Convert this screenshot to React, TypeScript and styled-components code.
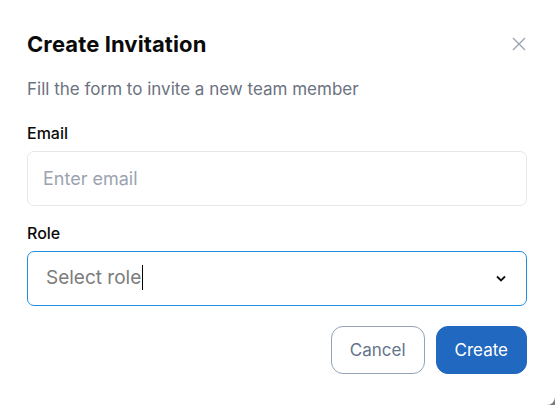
import React from 'react';
import styled, { createGlobalStyle } from 'styled-components';

const GlobalStyle = createGlobalStyle`
  html, body {
    margin: 0;
    padding: 0;
    background: #7a7a7a;
  }
  * {
    box-sizing: border-box;
  }
`;

const Dialog = styled.div`
  width: 555px;
  height: 405px;
  background: #ffffff;
  border-bottom-right-radius: 8px;
  padding: 28px 28px 0 27px;
  font-family: Inter, 'Noto Sans', sans-serif;
  display: flex;
  flex-direction: column;
`;

const Header = styled.div`
  display: flex;
  align-items: center;
  justify-content: space-between;
  height: 32px;
`;

const Title = styled.h2`
  margin: 0;
  font-size: 22px;
  font-weight: 700;
  color: #0a0a0a;
  letter-spacing: 0.1px;
`;

const CloseButton = styled.button`
  border: none;
  background: none;
  padding: 0;
  margin-right: -1px;
  width: 18px;
  height: 18px;
  display: flex;
  align-items: center;
  justify-content: center;
  color: #9ca3af;
  cursor: pointer;
`;

const Description = styled.p`
  margin: 17px 0 0;
  font-size: 17px;
  line-height: 24px;
  color: #6b7280;
`;

const Field = styled.div<{ $top: number }>`
  display: flex;
  flex-direction: column;
  gap: 8px;
  margin-top: ${(p) => p.$top}px;
`;

const Label = styled.label`
  font-size: 16px;
  font-weight: 500;
  line-height: 20px;
  color: #0a0a0a;
`;

const Box = styled.div<{ $focused?: boolean }>`
  height: 55px;
  border: 1px solid ${(p) => (p.$focused ? '#1d8fde' : '#e5e7eb')};
  border-radius: 7px;
  display: flex;
  align-items: center;
  padding: 0 20px 0 ${(p) => (p.$focused ? 18 : 15)}px;
  font-size: ${(p) => (p.$focused ? 19 : 18)}px;
`;

const Placeholder = styled.span<{ $tone: string }>`
  flex: 1;
  color: ${(p) => p.$tone};
`;

const Caret = styled.span`
  display: inline-block;
  width: 1px;
  height: 25px;
  background: #000;
  vertical-align: middle;
  margin-left: 1px;
  transform: translateY(-1px);
`;

const Footer = styled.div`
  display: flex;
  justify-content: flex-end;
  gap: 11px;
  margin-top: 20px;
`;

const Button = styled.button<{ $primary?: boolean }>`
  height: 48px;
  padding: 0 18px;
  border-radius: 12px;
  font-family: inherit;
  font-size: 17px;
  cursor: pointer;
  border: 1px solid ${(p) => (p.$primary ? '#2168c0' : '#94a3b8')};
  background: ${(p) => (p.$primary ? '#2168c0' : '#ffffff')};
  color: ${(p) => (p.$primary ? '#ffffff' : '#64748b')};
`;

const App: React.FC = () => (
  <>
    <GlobalStyle />
    <Dialog>
      <Header>
        <Title>Create Invitation</Title>
        <CloseButton aria-label="Close">
          <svg width="16" height="16" viewBox="0 0 16 16" fill="none">
            <path d="M2 2L14 14M14 2L2 14" stroke="currentColor" strokeWidth="1.4" />
          </svg>
        </CloseButton>
      </Header>
      <Description>Fill the form to invite a new team member</Description>
      <Field $top={22}>
        <Label>Email</Label>
        <Box>
          <Placeholder $tone="#9ca3af">Enter email</Placeholder>
        </Box>
      </Field>
      <Field $top={17}>
        <Label>Role</Label>
        <Box $focused>
          <Placeholder $tone="#7c7c7c">
            Select role
            <Caret />
          </Placeholder>
          <svg width="10" height="7" viewBox="0 0 10 7" fill="none">
            <path d="M1 1.5L5 5.5L9 1.5" stroke="#111" strokeWidth="1.8" />
          </svg>
        </Box>
      </Field>
      <Footer>
        <Button>Cancel</Button>
        <Button $primary>Create</Button>
      </Footer>
    </Dialog>
  </>
);

export default App;
